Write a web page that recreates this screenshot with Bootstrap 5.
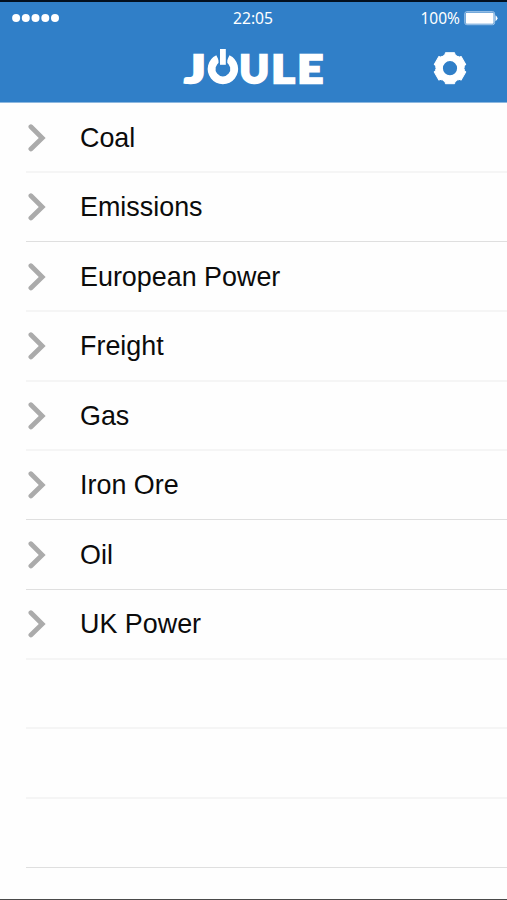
<!DOCTYPE html>
<html lang="en">
<head>
<meta charset="utf-8">
<meta name="viewport" content="width=device-width, initial-scale=1">
<title>Joule</title>
<link rel="stylesheet" href="https://cdn.jsdelivr.net/npm/bootstrap@5.3.0/dist/css/bootstrap.min.css">
<style>
  body { font-family: "Liberation Sans", Arial, sans-serif; background: #fefefe; color: #0b0b0b; }
  .screen { height: 900px; border-top: 2px solid #03101f; border-bottom: 1px solid #4a4a4a; }
  .app-header { height: 101px; background: #307fc8; border-bottom: 1px solid #8db8e0; }
  .status-bar { height: 33px; padding: 0 9px 0 12px; font: 17px/33px "Noto Sans", "Open Sans", sans-serif; }
  .status-bar svg { display: block; }
  .side { width: 117px; }
  .brand-row { height: 67px; padding-right: 40px; }
  .brand-logo { margin-left: 176px; }
  .topics { padding-left: 26px; }
  .topic { height: 70px; padding-top: 1px; border-bottom: 2px solid #f5f5f5; font-size: 26.9px; line-height: 30px; }
  .topic.crisp { height: 69px; border-bottom: 1px solid #dfdfdf; }
  .topic.short { height: 69px; }
  .topic.tall { height: 70px; }
  .topic:nth-child(2n) { padding-top: 0; padding-bottom: 1px; }
  .topic svg { margin: 0 34px 0 1px; flex: none; }
</style>
</head>
<body>
<svg class="d-none">
  <symbol id="chevron" viewBox="0 0 19 28"><path d="M3.9 2.8 L15.2 14 L3.9 24.9" fill="none" stroke="#ababab" stroke-width="4.8" stroke-linecap="round"/></symbol>
</svg>
<div class="screen d-flex flex-column overflow-hidden">
  <header class="app-header text-white">
    <div class="status-bar d-flex justify-content-between align-items-center">
      <div class="side">
        <svg width="48" height="9" viewBox="0 0 48 9" fill="#fff"><circle cx="4.1" cy="4" r="4"/><circle cx="13.8" cy="4" r="4"/><circle cx="23.5" cy="4" r="4"/><circle cx="33.3" cy="4" r="4"/><circle cx="43" cy="4" r="4"/></svg>
      </div>
      <svg width="44" height="32" fill="#fff"><text x="0" y="21" font-size="16.5" textLength="40" lengthAdjust="spacingAndGlyphs">22:05</text></svg>
      <div class="side d-flex justify-content-end align-items-center">
        <svg width="44" height="32" fill="#fff"><text x="0.5" y="21" font-size="16.5" textLength="39.5" lengthAdjust="spacingAndGlyphs">100%</text></svg>
        <svg width="34" height="16" viewBox="0 0 34 16"><rect x=".8" y=".7" width="29.8" height="13" rx="2" fill="none" stroke="#a9cbea" stroke-width="1"/><rect x="1.8" y="1.7" width="27.8" height="11" rx="1" fill="#fff"/><path d="M31.5 4.2 Q35.5 7.2 31.5 10.2Z" fill="#fff"/></svg>
      </div>
    </div>
    <div class="brand-row d-flex justify-content-between align-items-center">
      <svg class="brand-logo" width="154" height="66" viewBox="176 35 154 66" fill="#fff" role="img" aria-label="Joule">
        <g font-family="Lato, sans-serif" font-weight="900" font-size="37.5" stroke="#fff" stroke-width="2.4">
          <text x="184.4" y="81.5" textLength="21" lengthAdjust="spacingAndGlyphs">J</text>
          <text x="239.6" y="81.5" textLength="29.5" lengthAdjust="spacingAndGlyphs">U</text>
          <text x="271.6" y="81.5" textLength="23" lengthAdjust="spacingAndGlyphs">L</text>
          <text x="297.4" y="81.5" textLength="25.5" lengthAdjust="spacingAndGlyphs">E</text>
        </g>
        <path d="M218 57.8 A11.3 11.3 0 1 0 227.8 57.8" fill="none" stroke="#fff" stroke-width="7.8"/>
        <rect x="218.5" y="47" width="8.8" height="18.3" fill="#307fc8"/>
        <rect x="220" y="48" width="5.8" height="15.8"/>
      </svg>
      <svg width="34" height="34" viewBox="-17 -16.2 34 34">
        <circle r="10.3" fill="none" stroke="#fff" stroke-width="6.4"/>
        <g fill="#fff" stroke="#fff" stroke-width="1" stroke-linejoin="round"><path id="cog" d="M-6.8 -10.8 L-6.3 -12.9 L-5 -13.4 L-4.6 -15.5 H4.6 L5 -13.4 L6.3 -12.9 L6.8 -10.8Z"/><use href="#cog" transform="rotate(60)"/><use href="#cog" transform="rotate(120)"/><use href="#cog" transform="rotate(180)"/><use href="#cog" transform="rotate(240)"/><use href="#cog" transform="rotate(300)"/></g>
      </svg>
    </div>
  </header>
  <ul class="topics list-unstyled mb-0">
    <li class="topic d-flex align-items-center"><svg width="19" height="28"><use href="#chevron"/></svg>Coal</li>
    <li class="topic crisp d-flex align-items-center"><svg width="19" height="28"><use href="#chevron"/></svg>Emissions</li>
    <li class="topic d-flex align-items-center"><svg width="19" height="28"><use href="#chevron"/></svg>European Power</li>
    <li class="topic d-flex align-items-center"><svg width="19" height="28"><use href="#chevron"/></svg>Freight</li>
    <li class="topic short d-flex align-items-center"><svg width="19" height="28"><use href="#chevron"/></svg>Gas</li>
    <li class="topic crisp d-flex align-items-center"><svg width="19" height="28"><use href="#chevron"/></svg>Iron Ore</li>
    <li class="topic crisp tall d-flex align-items-center"><svg width="19" height="28"><use href="#chevron"/></svg>Oil</li>
    <li class="topic d-flex align-items-center"><svg width="19" height="28"><use href="#chevron"/></svg>UK Power</li>
    <li class="topic short"></li>
    <li class="topic"></li>
    <li class="topic crisp"></li>
  </ul>
</div>
<script src="https://cdn.jsdelivr.net/npm/bootstrap@5.3.0/dist/js/bootstrap.bundle.min.js"></script>
</body>
</html>
